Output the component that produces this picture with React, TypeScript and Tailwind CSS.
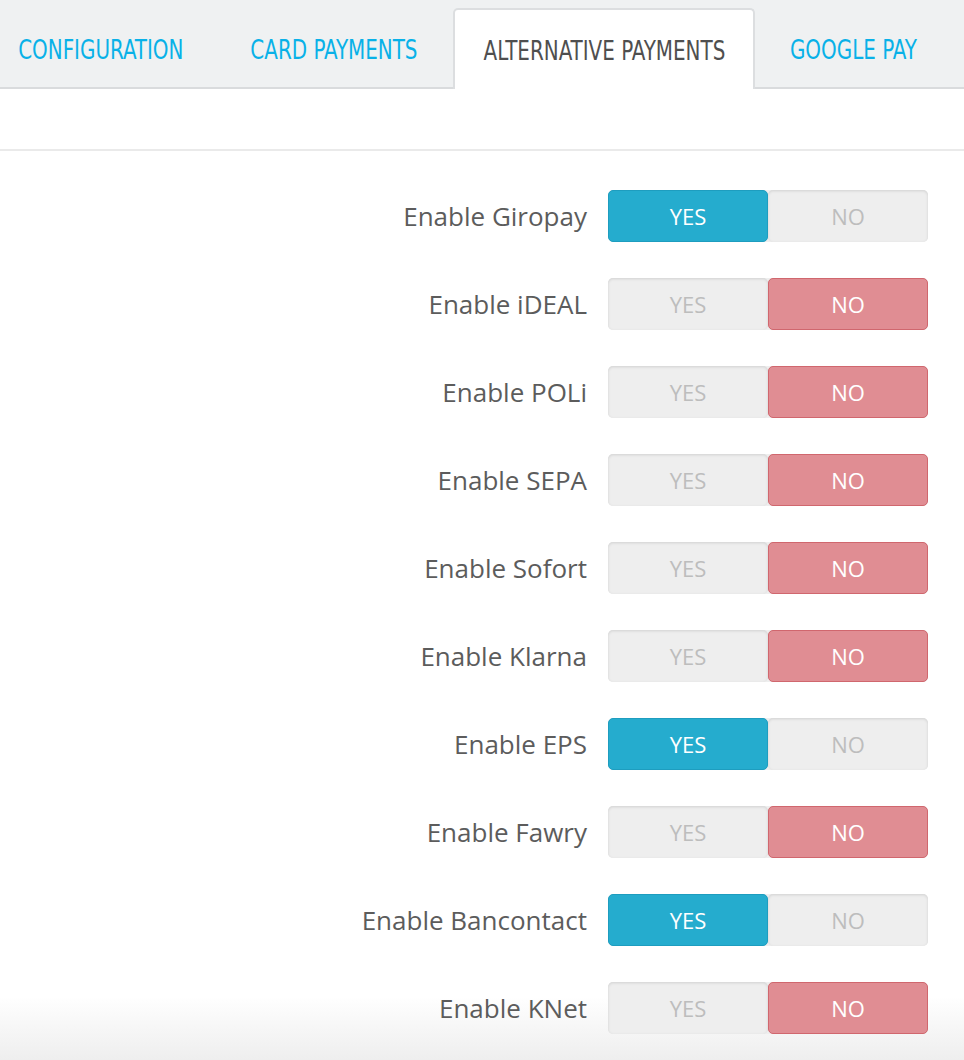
type Option = {
  label: string;
  enabled: boolean;
};

const options: Option[] = [
  { label: "Enable Giropay", enabled: true },
  { label: "Enable iDEAL", enabled: false },
  { label: "Enable POLi", enabled: false },
  { label: "Enable SEPA", enabled: false },
  { label: "Enable Sofort", enabled: false },
  { label: "Enable Klarna", enabled: false },
  { label: "Enable EPS", enabled: true },
  { label: "Enable Fawry", enabled: false },
  { label: "Enable Bancontact", enabled: true },
  { label: "Enable KNet", enabled: false },
];

const tabFont = { fontFamily: '"Liberation Sans Narrow", "DejaVu Sans Condensed", "Liberation Sans", sans-serif' };

function Switch({ enabled }: { enabled: boolean }) {
  const off =
    "bg-[#eeeeee] text-[#bdbdbd] shadow-[inset_0_1px_3px_rgba(0,0,0,0.12)]";
  return (
    <div className="flex h-[52px] w-[320px] rounded-[5px] bg-[#eeeeee] text-[22px]">
      <div
        className={`flex w-[160px] items-center justify-center rounded-[5px] ${
          enabled ? "border border-[#1e9dbf] bg-[#25acce] text-white" : off
        }`}
      >
        YES
      </div>
      <div
        className={`flex w-[160px] items-center justify-center rounded-[5px] ${
          enabled ? off : "border border-[#d0676e] bg-[#e08d93] text-white"
        }`}
      >
        NO
      </div>
    </div>
  );
}

function TabLabel({ children }: { children: string }) {
  return <span className="inline-block scale-x-[0.82] whitespace-nowrap text-[27px]">{children}</span>;
}

export default function App() {
  return (
    <div
      className="flex h-[1060px] w-[964px] flex-col overflow-hidden bg-white"
      style={{ fontFamily: '"Open Sans", sans-serif' }}
    >
      <div className="flex h-[89px] shrink-0 items-end border-b-2 border-[#d9dbdd] bg-[#eff1f2]" style={tabFont}>
        <div className="flex h-[79px] w-[202px] items-center justify-center pt-[5px] text-[#09b1e8]">
          <TabLabel>CONFIGURATION</TabLabel>
        </div>
        <div className="ml-[30px] flex h-[79px] w-[204px] items-center justify-center pt-[5px] text-[#09b1e8]">
          <TabLabel>CARD PAYMENTS</TabLabel>
        </div>
        <div className="relative -mb-[2px] ml-[17px] flex h-[81px] w-[302px] items-center justify-center rounded-t-[5px] border-2 border-b-0 border-[#dcdee0] bg-white pt-[3px] text-[#4f4f4f]">
          <TabLabel>ALTERNATIVE PAYMENTS</TabLabel>
        </div>
        <div className="ml-[6px] flex h-[79px] w-[185px] items-center justify-center pt-[5px] text-[#09b1e8]">
          <TabLabel>GOOGLE PAY</TabLabel>
        </div>
      </div>

      <div className="h-[62px] shrink-0 border-b-2 border-[#eaeaea]" />

      <div className="flex flex-1 flex-col gap-[36px] bg-linear-to-b from-white from-[93%] to-[#eeeeee] pt-[39px]">
        {options.map((opt) => (
          <div key={opt.label} className="flex items-center">
            <div className="w-[588px] pr-[1px] text-right text-[26px] text-[#5c5c5c]">{opt.label}</div>
            <div className="ml-[20px]">
              <Switch enabled={opt.enabled} />
            </div>
          </div>
        ))}
      </div>
    </div>
  );
}
